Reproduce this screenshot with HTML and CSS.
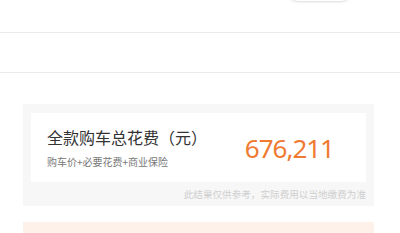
FILE: index.html
```html
<!DOCTYPE html>
<html lang="zh-CN">
<head>
<meta charset="utf-8">
<link rel="stylesheet" href="styles.css">
</head>
<body>
<div class="top"><div class="pill"></div></div>
<div class="row"></div>
<section class="result">
  <div class="card">
    <div class="labels">
      <div class="title">全款购车总花费（元）</div>
      <div class="sub">购车价+必要花费+商业保险</div>
    </div>
    <div class="amount">676,211</div>
  </div>
  <p class="note">此结果仅供参考，实际费用以当地缴费为准</p>
</section>
<div class="tip"></div>
</body>
</html>
```
FILE: styles.css
```css
* { box-sizing: border-box; }
html, body { margin: 0; padding: 0; background: #fff; }
body {
  font-family: "Noto Sans", "Noto Sans CJK SC", sans-serif;
  width: 400px;
  overflow: hidden;
}
.top {
  height: 33px;
  border-bottom: 1px solid #ebebeb;
  display: flex;
  justify-content: flex-end;
  padding-right: 48px;
}
.pill {
  width: 65px;
  height: 22px;
  margin-top: -20px;
  border-radius: 11px;
  border: 1px solid #e6e6e6;
  box-shadow: 0 1px 2px rgba(0,0,0,0.06);
}
.row {
  height: 40px;
  border-bottom: 1px solid #ebebeb;
}
.result {
  margin: 31px 26px 0 23px;
  padding: 9px 8px 0;
  background: #f7f7f7;
}
.card {
  background: #fff;
  height: 69px;
  display: flex;
  justify-content: space-between;
  align-items: flex-start;
  padding: 0 32px 0 16px;
}
.labels { padding-top: 14px; }
.title {
  font-family: "Noto Sans CJK SC", sans-serif;
  font-size: 16px;
  line-height: 20px;
  color: #333;
}
.sub {
  font-family: "Noto Sans CJK SC", sans-serif;
  margin-top: 8px;
  font-size: 10px;
  line-height: 14px;
  color: #777;
}
.amount {
  align-self: center;
  font-family: "Noto Sans", sans-serif;
  font-size: 26px;
  line-height: 30px;
  letter-spacing: -1px;
  color: #f07a32;
}
.note {
  margin: 0;
  height: 24px;
  line-height: 25px;
  text-align: right;
  font-family: "Noto Sans CJK SC", sans-serif;
  font-size: 9.6px;
  color: #cfcfcf;
}
.tip {
  margin: 16px 26px 0 23px;
  height: 11px;
  background: #fdf1e9;
}
```
